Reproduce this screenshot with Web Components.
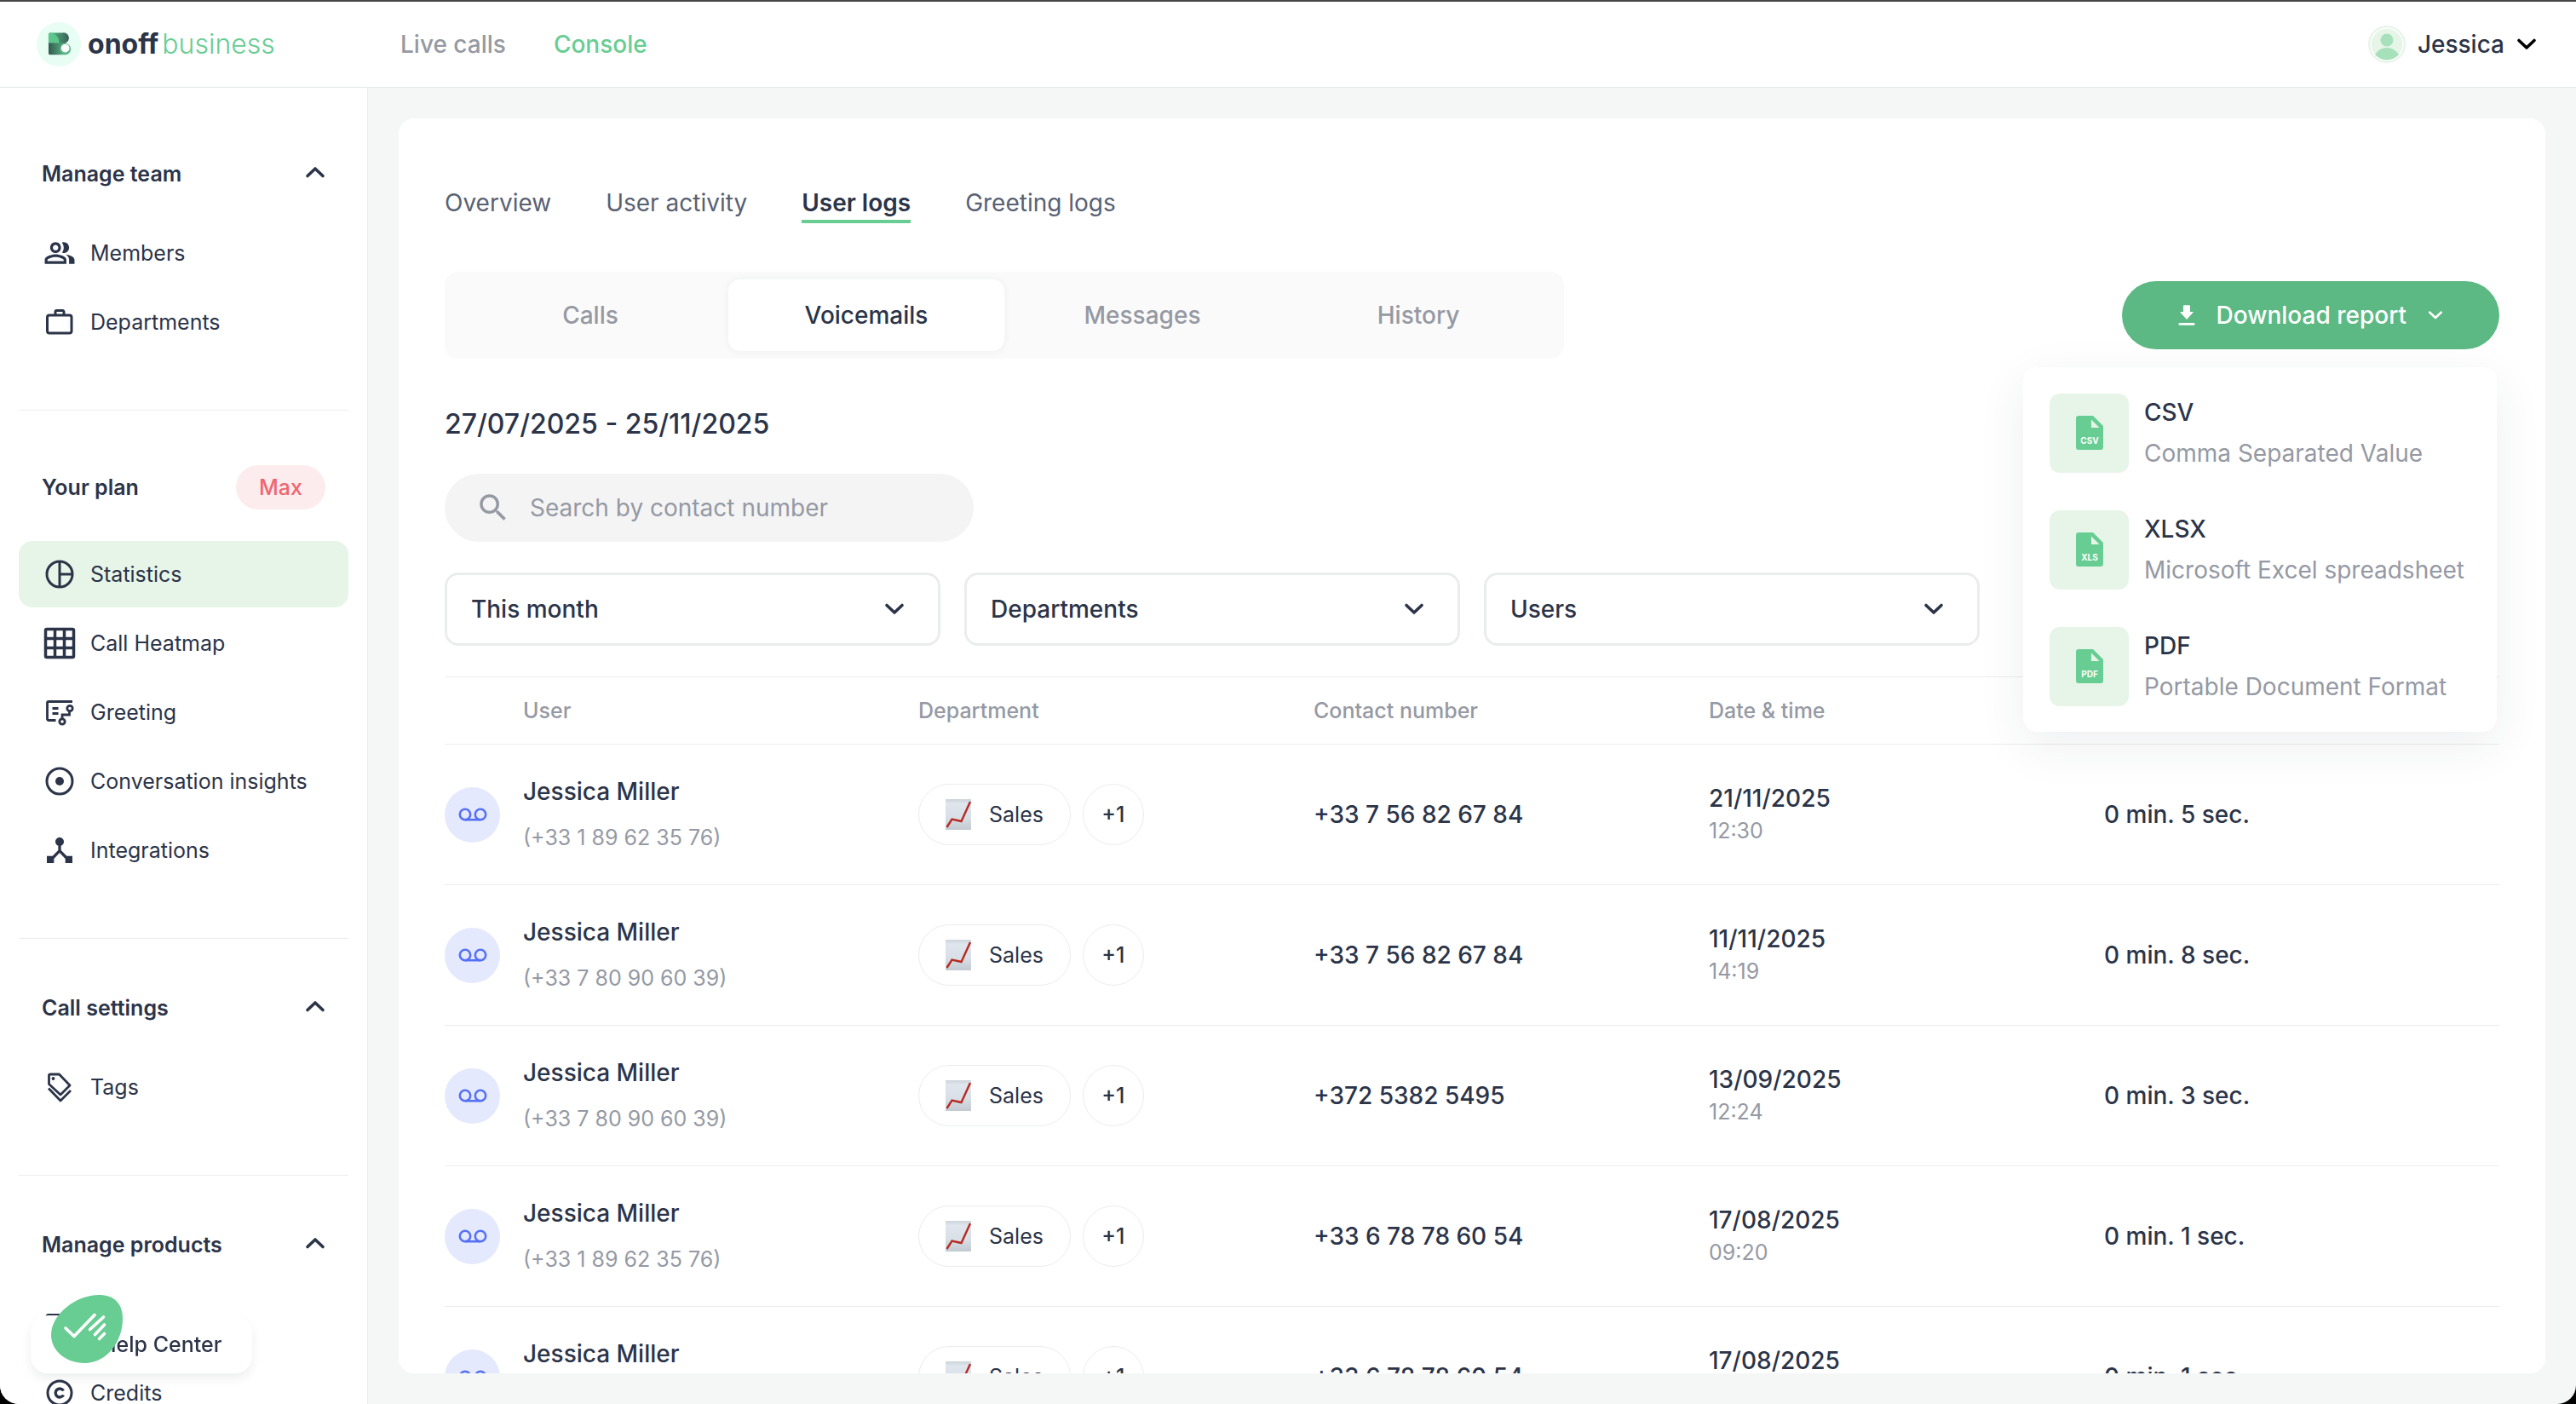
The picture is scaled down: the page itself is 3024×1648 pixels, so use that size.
<!DOCTYPE html>
<html lang="en">
<head>
<meta charset="UTF-8">
<meta name="viewport" content="width=device-width, initial-scale=1.0">
<title>onoff business - Console</title>
<style>
  html, body { margin: 0; height: 100%; }
  body {
    --ink: #2b3448;
    --muted: #9599a3;
    --green: #68cd93;
    --mint: #e7f5e9;
    --line: #ebeded;
    background: #000;
    color: var(--ink);
    font: 400 28px/40px Inter, sans-serif;
  }
</style>
</head>
<body>
<app-shell>
  <app-header slot="header"></app-header>
  <app-sidebar slot="sidebar">
    <side-section heading="Manage team">
      <side-link icon="members">Members</side-link>
      <side-link icon="departments">Departments</side-link>
    </side-section>
    <side-section heading="Your plan" badge="Max">
      <side-link icon="statistics" active>Statistics</side-link>
      <side-link icon="heatmap">Call Heatmap</side-link>
      <side-link icon="greeting">Greeting</side-link>
      <side-link icon="insights">Conversation insights</side-link>
      <side-link icon="integrations">Integrations</side-link>
    </side-section>
    <side-section heading="Call settings">
      <side-link icon="tags">Tags</side-link>
    </side-section>
    <side-section heading="Manage products">
      <side-link icon="card" label="Billing"></side-link>
      <side-link icon="credits">Credits</side-link>
    </side-section>
  </app-sidebar>
  <user-logs></user-logs>
  <help-widget slot="widget"></help-widget>
</app-shell>

<script>
const ICONS = {
  members: '<svg viewBox="-0.6 -0.6 25.2 25.2" fill="currentColor"><path d="M16.67 13.13C18.04 14.06 19 15.32 19 17v3h4v-3c0-2.18-3.57-3.47-6.33-3.87zM15 12c2.21 0 4-1.79 4-4s-1.79-4-4-4c-.47 0-.91.1-1.33.24C14.5 5.27 15 6.58 15 8s-.5 2.73-1.33 3.76c.42.14.86.24 1.33.24z"/><path fill-rule="evenodd" d="M9 12c2.21 0 4-1.79 4-4s-1.79-4-4-4-4 1.79-4 4 1.79 4 4 4zm0-6c1.1 0 2 .9 2 2s-.9 2-2 2-2-.9-2-2 .9-2 2-2zm0 7c-2.67 0-8 1.34-8 4v3h16v-3c0-2.66-5.33-4-8-4zm6 5H3v-.99C3.2 16.29 6.3 15 9 15s5.8 1.29 6 2v1z"/></svg>',
  departments: '<svg viewBox="0 0 40 40" fill="none" stroke="currentColor" stroke-width="3" stroke-linejoin="round"><rect x="5.5" y="12" width="28.500" height="21" rx="2.500"/><path d="M15 12V8a1.500 1.500 0 0 1 1.500-1.500h7A1.500 1.500 0 0 1 25 8v4"/></svg>',
  statistics: '<svg viewBox="0 0 40 40" fill="none" stroke="currentColor" stroke-width="3"><circle cx="20" cy="20" r="15"/><path d="M20 5v30M20 20h15"/></svg>',
  heatmap: '<svg viewBox="0 0 40 40" fill="none" stroke="currentColor" stroke-width="3.500"><rect x="3.500" y="3.500" width="33" height="33" rx="1.500"/><path d="M14.500 3.500v33M25.500 3.500v33M3.500 14.500h33M3.500 25.500h33"/></svg>',
  greeting: '<svg viewBox="0 0 40 40" fill="none" stroke="currentColor" stroke-width="2.800"><path d="M35 7.500H7A1.500 1.500 0 0 0 5.500 9v19A1.500 1.500 0 0 0 7 29.500h8.500M11.500 15.500h7M11.500 21.500h7" stroke-linejoin="round"/><circle cx="32" cy="15.500" r="3.200"/><circle cx="23" cy="31" r="3.200"/><path d="M23 27.500v-4.500h8.500v-4"/></svg>',
  insights: '<svg viewBox="0 0 40 40" fill="none" stroke="currentColor" stroke-width="3"><circle cx="20" cy="20" r="15"/><circle cx="20" cy="20" r="5" fill="currentColor" stroke="none"/></svg>',
  integrations: '<svg viewBox="0 0 24 24" fill="currentColor"><path d="M17 16l-4-4V8.820C14.160 8.400 15 7.300 15 6c0-1.660-1.340-3-3-3S9 4.340 9 6c0 1.300.84 2.400 2 2.820V12l-4 4H3v5h5v-3.050l4-4.200 4 4.200V21h5v-5h-4z"/></svg>',
  tags: '<svg viewBox="0 0 40 40" fill="none" stroke="currentColor" stroke-width="2.800" stroke-linejoin="round"><path d="M7.500 6.500A1.500 1.500 0 0 1 9 5h10.500l12.500 13-11 11L7.500 16.500z"/><path d="M7 21.500 21 36l12-12"/><circle cx="12.500" cy="10" r="1.200" fill="currentColor" stroke-width="1.500"/></svg>',
  card: '<svg viewBox="0 0 40 40" fill="none" stroke="currentColor" stroke-width="3"><rect x="5" y="9.500" width="30" height="22" rx="2"/><path d="M5 17h30"/></svg>',
  credits: '<svg viewBox="0 0 40 40" fill="none" stroke="currentColor" stroke-width="3"><circle cx="20" cy="20" r="14"/><path d="M24.500 17.500a5 5 0 1 0 0 5" stroke-width="3.400"/></svg>',
  chevron: '<svg viewBox="0 0 24 24" fill="none" stroke="currentColor" stroke-width="3.600" stroke-linecap="round" stroke-linejoin="round"><path d="M3 7.500l9 8.500 9-8.500"/></svg>',
  search: '<svg viewBox="0 0 24 24" fill="currentColor"><path d="M15.500 14h-.79l-.28-.27A6.470 6.470 0 0 0 16 9.500 6.500 6.500 0 1 0 9.500 16c1.610 0 3.090-.59 4.230-1.570l.27.28v.79l5 4.990L20.490 19l-4.990-5zm-6 0C7.010 14 5 11.990 5 9.500S7.010 5 9.500 5 14 7.010 14 9.500 11.990 14 9.500 14z"/></svg>',
  download: '<svg viewBox="0 0 20 24" fill="currentColor"><path d="M6.500.8h7v7.700h3.700L10 16.500 2.800 8.500h3.700z" stroke="currentColor" stroke-linejoin="round"/><rect x="0.500" y="21" width="19" height="2.800" rx="1"/></svg>',
  voicemail: '<svg viewBox="0 0 34 16" fill="none" stroke="currentColor" stroke-width="2.600"><circle cx="8" cy="8" r="6.200"/><circle cx="26" cy="8" r="6.200"/><path d="M8 14.200h18"/></svg>',
  chart: '<svg viewBox="0 0 30 36"><defs><linearGradient id="paper" x1="0" y1="0" x2="0" y2="1"><stop offset="0" stop-color="#ccd4da"/><stop offset="0.150" stop-color="#dfe6ed"/><stop offset="0.600" stop-color="#d9dfe7"/><stop offset="1" stop-color="#c3c9d1"/></linearGradient></defs><path fill="url(#paper)" d="M0 0h30v36H0z"/><path d="M1.500 33l6-9.500 11 2.500L29 3" fill="none" stroke="#b82a22" stroke-width="2.400"/></svg>'
};

class BaseElement extends HTMLElement {
  connectedCallback() {
    if (this.shadowRoot) return;
    this.attachShadow({ mode: 'open' });
    this.shadowRoot.innerHTML = this.render();
  }
}

class AppShell extends BaseElement {
  render() {
    return `
      <style>
        :host {
          display: grid;
          grid-template: auto minmax(0, 1fr) / 432px minmax(0, 1fr);
          height: 100vh;
          box-sizing: border-box;
          border-top: 2px solid #474547;
          border-radius: 0 0 22px 22px;
          overflow: hidden;
          background: #f5f7f7;
        }
        ::slotted([slot="header"]) { grid-column: 1 / -1; }
        main { min-height: 0; padding: 36px; display: grid; }
      </style>
      <slot name="header"></slot>
      <slot name="sidebar"></slot>
      <main><slot></slot></main>
      <slot name="widget"></slot>
    `;
  }
}

class AppHeader extends BaseElement {
  render() {
    return `
      <style>
        :host {
          display: flex;
          align-items: center;
          height: 100px;
          padding: 0 46px 0 43px;
          background: #fff;
          border-bottom: 1px solid #e4e9e7;
        }
        a { text-decoration: none; color: inherit; }
        .logo {
          display: flex;
          align-items: center;
          gap: 8px;
          width: 427px;
          font-size: 32px;
          color: var(--green);
        }
        .logo svg { width: 52px; height: 52px; }
        .wordmark { display: flex; gap: 4px; }
        .logo b { font-weight: 700; color: var(--ink); }
        .logo span { font-weight: 300; }
        nav { display: flex; gap: 56px; color: var(--muted); font-weight: 500; }
        nav .current { color: var(--green); }
        .account {
          display: flex;
          align-items: center;
          gap: 14px;
          margin-left: auto;
          padding: 0;
          border: 0;
          background: none;
          font: inherit;
          font-weight: 500;
          color: var(--ink);
        }
        .avatar { width: 44px; height: 44px; }
        .chevron { display: flex; color: #000; }
        .chevron svg { width: 24px; height: 24px; }
      </style>
      <a class="logo" href="#home">
        <svg viewBox="0 0 51 51">
          <defs>
            <linearGradient id="top"><stop offset="0.300" stop-color="#4ba578"/><stop offset="1" stop-color="#3a5f59"/></linearGradient>
            <linearGradient id="low"><stop offset="0" stop-color="#315a50"/><stop offset="1" stop-color="#5cb889"/></linearGradient>
          </defs>
          <circle cx="25.500" cy="25.500" r="25.500" fill="#e8fdf4"/>
          <path d="M13.700 14a1.800 1.800 0 0 1 1.800-1.800h14.500a6.200 6.200 0 0 1 3.500 11.800L33 25H13.700z" fill="url(#top)"/>
          <path d="M15 12.200c6 0 11 5 11 12H13.700V14z" fill="#5cc78b"/>
          <path d="M13.700 24h19.800v13.500h-18a1.800 1.800 0 0 1-1.800-1.800z" fill="url(#low)"/>
          <circle cx="33" cy="31" r="6.400" fill="#5cb889"/>
          <circle cx="33" cy="30" r="4.800" fill="#fff"/>
        </svg>
        <span class="wordmark"><b>onoff</b><span>business</span></span>
      </a>
      <nav>
        <a href="#live">Live calls</a>
        <a href="#console" class="current">Console</a>
      </nav>
      <button class="account">
        <svg class="avatar" viewBox="0 0 44 44">
          <defs><clipPath id="face"><circle cx="22" cy="22" r="18.500"/></clipPath></defs>
          <circle cx="22" cy="22" r="22" fill="#e7f5e9"/>
          <circle cx="22" cy="22" r="19" fill="none" stroke="#fff" stroke-width="1.400"/>
          <g fill="#a6e1bb" clip-path="url(#face)"><circle cx="22" cy="17" r="7.500"/><circle cx="22" cy="42" r="16"/></g>
        </svg>
        Jessica
        <span class="chevron">${ICONS.chevron}</span>
      </button>
    `;
  }
}

class AppSidebar extends BaseElement {
  render() {
    return `
      <style>
        :host {
          display: block;
          min-height: 0;
          overflow: hidden;
          padding: 20px 22px 0;
          background: #fff;
          border-right: 1px solid #e8ecea;
        }
      </style>
      <slot></slot>
    `;
  }
}

class SideSection extends BaseElement {
  render() {
    const badge = this.getAttribute('badge');
    return `
      <style>
        :host {
          display: block;
          padding: 64px 0;
          border-bottom: 1px solid var(--line);
        }
        header {
          display: flex;
          align-items: center;
          justify-content: space-between;
          padding: 0 27px;
          margin-bottom: 37px;
        }
        h2 { margin: 0; font-size: 25px; line-height: 34px; font-weight: 600; }
        button {
          display: flex;
          padding: 0 0 4px;
          border: 0;
          background: none;
          color: inherit;
        }
        button svg { width: 24px; height: 24px; transform: rotate(180deg); }
        .badge {
          padding: 0 27px;
          border-radius: 26px;
          background: #fdeced;
          color: #ee6770;
          font-size: 25px;
          line-height: 52px;
          font-weight: 500;
        }
        nav { display: grid; gap: 3px; }
      </style>
      <header>
        <h2>${this.getAttribute('heading')}</h2>
        ${badge ? `<span class="badge">${badge}</span>` : `<button aria-label="Collapse">${ICONS.chevron}</button>`}
      </header>
      <nav><slot></slot></nav>
    `;
  }
}

class SideLink extends BaseElement {
  render() {
    const label = this.getAttribute('label');
    return `
      <style>
        :host { display: block; }
        a {
          display: flex;
          align-items: center;
          gap: 16px;
          height: 78px;
          padding: 0 28px;
          border-radius: 16px;
          color: inherit;
          font-size: 25px;
          text-decoration: none;
          white-space: nowrap;
        }
        svg { width: 40px; height: 40px; flex: none; }
        :host([active]) a { background: var(--mint); }
      </style>
      <a href="#${this.getAttribute('icon')}"${label ? ` aria-label="${label}"` : ''}>
        ${ICONS[this.getAttribute('icon')]}<slot></slot>
      </a>
    `;
  }
}

class SegmentTabs extends BaseElement {
  render() {
    const items = this.getAttribute('items').split(',');
    const current = this.getAttribute('current');
    return `
      <style>
        :host {
          display: grid;
          grid-template-columns: repeat(4, 324px);
          padding: 9px;
          border-radius: 16px;
          background: #fafafa;
        }
        button {
          height: 84px;
          border: 0;
          border-radius: 14px;
          background: none;
          color: var(--muted);
          font: inherit;
          font-weight: 500;
        }
        button[aria-selected="true"] {
          background: #fff;
          color: var(--ink);
          box-shadow: 0 0 10px rgba(40, 50, 70, 0.06);
        }
      </style>
      ${items.map(name => `<button role="tab" aria-selected="${name === current}">${name}</button>`).join('')}
    `;
  }
}

class ReportMenu extends BaseElement {
  file(type, title, text) {
    return `
      <button class="item">
        <span class="tile">
          <svg viewBox="0 0 32 40">
            <path d="M3 0h17l12 12v25a3 3 0 0 1-3 3H3a3 3 0 0 1-3-3V3a3 3 0 0 1 3-3z" fill="#68cd93"/>
            <path d="M18 4.500V14h9.500z" fill="#e7f5e9"/>
            <text x="16" y="33" text-anchor="middle" font-size="10" font-weight="700" fill="#fff">${type}</text>
          </svg>
        </span>
        <span class="label"><strong>${title}</strong><small>${text}</small></span>
      </button>`;
  }
  render() {
    return `
      <style>
        :host { display: block; position: relative; z-index: 1; }
        button { border: 0; font: inherit; color: inherit; }
        .trigger {
          display: flex;
          align-items: center;
          gap: 25px;
          height: 80px;
          padding: 0 66px;
          border-radius: 40px;
          background: #5cb983;
          color: #fff;
          font-weight: 500;
        }
        .trigger svg { width: 20px; height: 24px; }
        .trigger svg:last-child { width: 18px; }
        .menu {
          position: absolute;
          top: 101px;
          right: 3px;
          display: grid;
          gap: 41px;
          box-sizing: border-box;
          min-width: 556px;
          padding: 29px 31px;
          border-radius: 16px;
          background: #fff;
          box-shadow: 0 16px 56px rgba(40, 56, 70, 0.08);
        }
        .item {
          display: flex;
          align-items: center;
          gap: 18px;
          padding: 0;
          background: none;
          text-align: left;
          white-space: nowrap;
        }
        .tile {
          display: grid;
          place-items: center;
          width: 93px;
          height: 93px;
          border-radius: 12px;
          background: var(--mint);
        }
        .tile svg { width: 32px; height: 40px; }
        .label { display: grid; line-height: 48px; }
        strong { font-weight: 500; }
        small { font-size: 28px; color: var(--muted); }
      </style>
      <button class="trigger" aria-haspopup="menu" aria-expanded="true">
        ${ICONS.download}Download report${ICONS.chevron}
      </button>
      <div class="menu">
        ${this.file('CSV', 'CSV', 'Comma Separated Value')}
        ${this.file('XLS', 'XLSX', 'Microsoft Excel spreadsheet')}
        ${this.file('PDF', 'PDF', 'Portable Document Format')}
      </div>
    `;
  }
}

class FilterSelect extends BaseElement {
  render() {
    const value = this.getAttribute('value');
    return `
      <style>
        :host { display: grid; align-items: center; }
        select, svg { grid-area: 1 / 1; }
        select {
          appearance: none;
          width: 100%;
          height: 86px;
          padding: 0 28px;
          border: 3px solid var(--line);
          border-radius: 16px;
          background: #fff;
          color: var(--ink);
          font: inherit;
          font-weight: 500;
        }
        svg { width: 24px; height: 24px; justify-self: end; margin-right: 42px; pointer-events: none; }
      </style>
      <select aria-label="${this.getAttribute('label')}"><option>${value}</option></select>
      ${ICONS.chevron}
    `;
  }
}

class VoicemailTable extends BaseElement {
  render() {
    const rows = [
      ['(+33 1 89 62 35 76)', '+33 7 56 82 67 84', '21/11/2025', '12:30', '0 min. 5 sec.'],
      ['(+33 7 80 90 60 39)', '+33 7 56 82 67 84', '11/11/2025', '14:19', '0 min. 8 sec.'],
      ['(+33 7 80 90 60 39)', '+372 5382 5495', '13/09/2025', '12:24', '0 min. 3 sec.'],
      ['(+33 1 89 62 35 76)', '+33 6 78 78 60 54', '17/08/2025', '09:20', '0 min. 1 sec.'],
      ['(+33 1 89 62 35 76)', '+33 6 78 78 60 54', '17/08/2025', '09:18', '0 min. 1 sec.']
    ];
    return `
      <style>
        :host { display: block; }
        table {
          width: 100%;
          table-layout: fixed;
          border-collapse: separate;
          border-spacing: 0;
          border-top: 1px solid var(--line);
        }
        th, td {
          box-sizing: border-box;
          padding: 0;
          border-bottom: 1px solid var(--line);
          text-align: left;
          vertical-align: middle;
        }
        th { height: 79px; font-size: 25px; font-weight: 500; color: var(--muted); }
        td { height: 165px; font-weight: 500; }
        .type { width: 92px; }
        .badge {
          display: grid;
          place-items: center;
          width: 65px;
          height: 65px;
          border-radius: 50%;
          background: #e4e9fd;
          color: #5670f5;
        }
        .badge svg { width: 34px; height: 16px; }
        small { display: block; font-size: 25px; font-weight: 400; color: var(--muted); }
        .user { line-height: 54px; }
        .date { line-height: 38px; }
        .chips { display: flex; gap: 14px; }
        .chip {
          display: flex;
          align-items: center;
          justify-content: center;
          gap: 21px;
          box-sizing: border-box;
          min-width: 72px;
          height: 72px;
          padding: 0 31px;
          border: 1px solid var(--line);
          border-radius: 36px;
          font-size: 25px;
          font-weight: 400;
        }
        .chip svg { width: 30px; height: 36px; }
        .more { padding: 0; font-weight: 500; }
      </style>
      <table>
        <thead>
          <tr><th class="type"></th><th>User</th><th>Department</th><th>Contact number</th><th>Date &amp; time</th><th></th></tr>
        </thead>
        <tbody>
          ${rows.map(([phone, contact, date, time, duration]) => `
            <tr>
              <td><span class="badge">${ICONS.voicemail}</span></td>
              <td class="user">Jessica Miller<small>${phone}</small></td>
              <td><div class="chips"><span class="chip">${ICONS.chart}Sales</span><span class="chip more">+1</span></div></td>
              <td>${contact}</td>
              <td class="date">${date}<small>${time}</small></td>
              <td>${duration}</td>
            </tr>`).join('')}
        </tbody>
      </table>
    `;
  }
}

class UserLogs extends BaseElement {
  render() {
    return `
      <style>
        :host {
          display: block;
          min-height: 0;
          overflow: hidden;
          padding: 79px 54px 0;
          border-radius: 18px;
          background: #fff;
        }
        .tabs { display: flex; gap: 64px; margin-bottom: 57px; }
        .tabs a {
          border-bottom: 4px solid transparent;
          color: #596173;
          text-decoration: none;
        }
        .tabs .current { color: var(--ink); border-color: var(--green); font-weight: 600; }
        .bar { display: flex; align-items: center; justify-content: space-between; }
        h1 { margin: 57px 0 38px; font-size: 32px; line-height: 40px; font-weight: 500; }
        .search {
          display: flex;
          align-items: center;
          gap: 22px;
          box-sizing: border-box;
          width: 621px;
          height: 80px;
          padding: 0 36px;
          border-radius: 40px;
          background: #f4f4f5;
          color: var(--muted);
        }
        .search svg { width: 42px; height: 42px; flex: none; }
        input {
          flex: 1;
          min-width: 0;
          padding: 0;
          border: 0;
          outline: 0;
          background: none;
          font: inherit;
          color: var(--ink);
        }
        input::placeholder { color: var(--muted); opacity: 1; }
        .filters { display: grid; grid-template-columns: repeat(4, 1fr); gap: 28px; margin: 36px 0; }
      </style>
      <nav class="tabs">
        <a href="#overview">Overview</a>
        <a href="#activity">User activity</a>
        <a href="#logs" class="current">User logs</a>
        <a href="#greetings">Greeting logs</a>
      </nav>
      <div class="bar">
        <segment-tabs role="tablist" items="Calls,Voicemails,Messages,History" current="Voicemails"></segment-tabs>
        <report-menu></report-menu>
      </div>
      <h1>27/07/2025 - 25/11/2025</h1>
      <label class="search">
        ${ICONS.search}
        <input type="text" placeholder="Search by contact number" aria-label="Search by contact number">
      </label>
      <div class="filters">
        <filter-select label="Period" value="This month"></filter-select>
        <filter-select label="Departments" value="Departments"></filter-select>
        <filter-select label="Users" value="Users"></filter-select>
      </div>
      <voicemail-table></voicemail-table>
    `;
  }
}

class HelpWidget extends BaseElement {
  render() {
    return `
      <style>
        :host { position: fixed; left: 36px; bottom: 36px; }
        a {
          display: block;
          padding: 0 36px 0 82px;
          border-radius: 20px;
          background: #fff;
          box-shadow: 0 6px 12px rgba(40, 56, 70, 0.08);
          color: inherit;
          font-size: 25px;
          line-height: 68px;
          font-weight: 500;
          text-decoration: none;
        }
        svg { position: absolute; left: 24px; bottom: 12px; width: 84px; height: 80px; }
      </style>
      <a href="#help">Help Center</a>
      <svg viewBox="0 0 84 80">
        <path d="M56 0C74 0 84 10 84 28 84 54 66 80 39 80 18 80 0 66 0 47 0 22 30 0 56 0z" fill="#68cd93"/>
        <path d="M17 39l10 9.500 24-25M45.500 40.500l16-14.500M51.500 46.500L62.500 35M56.500 51.500l6-6" fill="none" stroke="#fff" stroke-width="3.600" stroke-linecap="round" stroke-linejoin="round"/>
      </svg>
    `;
  }
}

customElements.define('app-shell', AppShell);
customElements.define('app-header', AppHeader);
customElements.define('app-sidebar', AppSidebar);
customElements.define('side-section', SideSection);
customElements.define('side-link', SideLink);
customElements.define('segment-tabs', SegmentTabs);
customElements.define('report-menu', ReportMenu);
customElements.define('filter-select', FilterSelect);
customElements.define('voicemail-table', VoicemailTable);
customElements.define('user-logs', UserLogs);
customElements.define('help-widget', HelpWidget);
</script>
</body>
</html>
